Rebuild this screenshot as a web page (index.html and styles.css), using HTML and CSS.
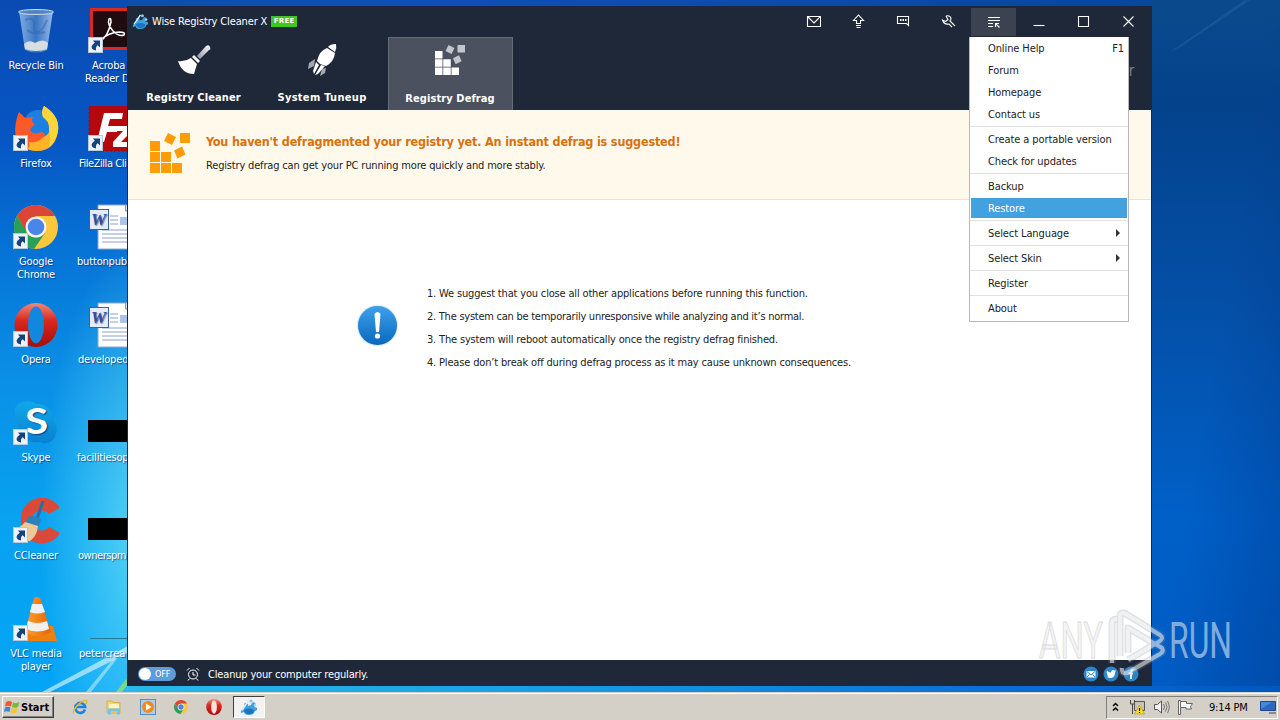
FILE: index.html
```html
<!DOCTYPE html>
<html lang="en">
<head>
    <meta charset="UTF-8">
    <meta name="viewport" content="width=device-width, initial-scale=1.0">
    <title>Wise Registry Cleaner X</title>
    <link rel="stylesheet" href="styles.css">
</head>
<body>
    <!-- Shared icons -->
    <svg class="sprite" width="0" height="0">
        <defs>
            <linearGradient id="gBin" x1="0" x2="1"><stop offset="0" stop-color="#a9cdf0"/><stop offset=".5" stop-color="#4a82c8"/><stop offset="1" stop-color="#c5def5"/></linearGradient>
            <linearGradient id="gFox" x1="0" x2="1"><stop offset="0" stop-color="#f2304c"/><stop offset=".5" stop-color="#ff8a1c"/><stop offset="1" stop-color="#ffd83a"/></linearGradient>
            <linearGradient id="gOpera" x1="0" y1="0" x2="0" y2="1"><stop offset="0" stop-color="#f08a7c"/><stop offset=".4" stop-color="#d8281e"/><stop offset="1" stop-color="#a80c08"/></linearGradient>
            <linearGradient id="gSkype" x1="0" y1="0" x2="0" y2="1"><stop offset="0" stop-color="#10a8ea"/><stop offset="1" stop-color="#0880d0"/></linearGradient>
            <linearGradient id="gCone" x1="0" x2="1"><stop offset="0" stop-color="#ffa030"/><stop offset="1" stop-color="#e86400"/></linearGradient>
            <linearGradient id="gInfo" x1="0" y1="0" x2="0" y2="1"><stop offset="0" stop-color="#3fa0ea"/><stop offset="1" stop-color="#0868c0"/></linearGradient>
            <linearGradient id="gFade" x1="1" y1="0" x2="0" y2="1"><stop offset="0" stop-color="#ffffff"/><stop offset="1" stop-color="#8a90a0"/></linearGradient>
        </defs>
        <symbol id="shortcut" viewBox="0 0 15 16">
            <rect x=".5" y=".5" width="14" height="15" fill="#eef2f8" stroke="#b8c8dc"/>
            <path d="M5 3.500h7v7L9.700 8.300Q7.500 9.500 8 13.500Q4 13 3.500 10Q3.800 7.500 6.800 5.700Z" fill="#16437e"/>
        </symbol>
        <symbol id="chrome" viewBox="0 0 44 44">
            <circle cx="22" cy="22" r="22" fill="#fbc83c"/>
            <path d="M22 11H41.100A22 22 0 0 0 3 11L12 27Z" fill="#dc4638"/>
            <path d="M3 11A22 22 0 0 0 20 44L31.500 27.500Q26 34 18 32Q13 30 12 26Z" fill="#28a05a"/>
            <circle cx="22" cy="22" r="10.500" fill="#f4f6f8"/>
            <circle cx="22" cy="22" r="8.300" fill="#4a86ea"/>
        </symbol>
        <symbol id="opera" viewBox="0 0 44 44">
            <ellipse cx="22" cy="22" rx="21.500" ry="22" fill="url(#gOpera)"/>
            <ellipse cx="22" cy="22" rx="8" ry="18.500" class="opera-hole"/>
        </symbol>
        <symbol id="blocks" viewBox="0 0 40 40">
            <path d="M0 8h10v10H0zM0 19h10v10H0zM0 30h10v10H0zM11 19h10v10H11zM11 30h10v10H11zM22 30h10v10H22z"/>
            <path d="M18 0l8 4-4 8-8-4z" class="loose"/>
            <path d="M30 0h10v10H30z" class="loose"/>
            <path d="M32 13.500l3.500 8-8 4-3.500-8z" class="loose"/>
        </symbol>
        <symbol id="wise" viewBox="0 0 18 18">
            <path d="M5 8Q3 5 6 5Q9 5 8 8L11 7Q12 3 15 5Q17 7 14 9Q18 9 17 12L15 13Q14 17 9 17Q4 17 4 14L1 15Q0 12 3 12Z" fill="#3c9fe0"/>
            <path d="M4 12Q9 9 14 12Q14 16 9 16Q5 16 4 12Z" fill="#1b74bd"/>
            <path d="M2 12L7 5L9 2" stroke="#dceeff" stroke-width="1.500" fill="none"/>
            <circle cx="11" cy="3" r="1.600" fill="#7ccaff"/>
            <circle cx="15" cy="7" r="1.300" fill="#a8dcff"/>
        </symbol>
        <symbol id="word" viewBox="0 0 44 46">
            <path d="M10 1h34v44H10z" fill="#fff" stroke="#8fa4d8"/>
            <path d="M22 12h8M22 16h8M22 20h8M14 26h30M14 30h30M14 34h30M14 38h30" stroke="#8f9fd0"/>
            <path d="M37.500 1v6H44" fill="#dde6f8" stroke="#7f94cc"/>
            <rect x="32" y="13" width="12" height="8" fill="#a9c4ea"/>
            <rect x="1.500" y="5.500" width="19" height="20" fill="#e4ebfa" stroke="#3f5ca8"/>
            <text x="3" y="21" class="word-w">W</text>
        </symbol>
    </svg>

    <div class="desktop">
        <svg class="rays" width="128" height="692" viewBox="0 0 128 692">
            <path d="M42 692L128 646V653L50 692Z" fill="#d8f6ff" opacity=".65"/>
            <path d="M86 692L114 658L116 660L91 692Z" fill="#d8f6ff" opacity=".5"/>
            <path d="M116 692L128 677V684L122 692Z" fill="#8ee070" opacity=".8"/>
        </svg>
        <svg class="ray-right" width="128" height="60" viewBox="0 0 128 60"><path d="M18 52L93 0H98L30 46Z" fill="#6aa4d0" opacity=".15"/></svg>

        <div class="icons">
            <div class="shortcut">
                <svg width="46" height="46" viewBox="0 0 46 46">
                    <path d="M6 3L12 42Q23 47 34 42L40 3Z" fill="url(#gBin)" opacity=".75"/>
                    <path d="M11 36Q16 31 22 35Q30 30 35 35L34 41Q23 45 12 41Z" fill="#d8dde4"/>
                    <path d="M12 12Q22 8 21 18T32 24M14 22Q26 32 34 12" stroke="#2f66b4" stroke-width="2" fill="none" opacity=".5"/>
                    <ellipse cx="23" cy="4" rx="17.500" ry="2.500" fill="#4f86c4" stroke="#d0dde8"/>
                </svg>
                <span>Recycle Bin</span>
            </div>
            <div class="shortcut">
                <svg width="46" height="46" viewBox="0 0 46 46">
                    <path d="M3 20Q4 12 9 8Q10 12 14 12Q25 3 37 9Q43 18 42 28Q36 43 23 43Q6 42 3 20Z" fill="url(#gFox)"/>
                    <circle cx="25" cy="18" r="14" fill="#1f7fe0"/>
                    <path d="M31 0Q47 10 45 25Q42 45 24 45Q6 45 3 26Q10 36 22 35Q37 34 36 23Q37 16 30 11Q28 5 31 0Z" fill="#ffb428"/>
                    <path d="M31 0Q47 10 45 25Q43 36 36 41Q38 30 36 23Q37 16 30 11Q28 5 31 0Z" fill="#ffd63a"/>
                    <path d="M2 24Q3 12 6 6L12 12L20 11Q17 15 22 18L17 23Q19 30 29 26Q35 28 28 33Q24 37 16 36Q18 44 12 41Q2 34 2 24Z" fill="#fb5a28"/>
                </svg>
                <svg class="badge" width="15" height="16"><use href="#shortcut"/></svg>
                <span>Firefox</span>
            </div>
            <div class="shortcut">
                <svg width="46" height="46" viewBox="-1 0 46 44"><use href="#chrome" width="44" height="44"/></svg>
                <svg class="badge" width="15" height="16"><use href="#shortcut"/></svg>
                <span>Google<br>Chrome</span>
            </div>
            <div class="shortcut">
                <svg width="46" height="46" viewBox="-1 0 46 44"><use href="#opera" width="44" height="44"/></svg>
                <svg class="badge" width="15" height="16"><use href="#shortcut"/></svg>
                <span>Opera</span>
            </div>
            <div class="shortcut">
                <svg width="46" height="46" viewBox="0 0 46 46">
                    <path d="M10 2Q18 0 23 4Q38 3 40 19Q46 27 42 37Q36 46 27 42Q6 44 5 25Q0 15 2 8Q5 2 10 2Z" fill="url(#gSkype)"/>
                    <text x="12" y="34" textLength="23" lengthAdjust="spacingAndGlyphs" class="skype-s">S</text>
                </svg>
                <svg class="badge" width="15" height="16"><use href="#shortcut"/></svg>
                <span>Skype</span>
            </div>
            <div class="shortcut">
                <svg width="46" height="46" viewBox="0 0 46 46">
                    <path d="M47 10A21 21 0 0 0 8 22A21 21 0 0 0 47 35L36 29A10 10 0 1 1 36 16Z" fill="#d94a38"/>
                    <path d="M30 3L24 21" stroke="#2a6da4" stroke-width="3"/>
                    <path d="M15 19Q20 16 28 21L26 28L13 25Z" fill="#2f80b8"/>
                    <path d="M12 24L25 28Q24 38 17 43H8Q5 36 0 32Q7 30 12 24Z" fill="#eec896"/>
                </svg>
                <svg class="badge" width="15" height="16"><use href="#shortcut"/></svg>
                <span>CCleaner</span>
            </div>
            <div class="shortcut">
                <svg width="46" height="46" viewBox="0 0 46 46">
                    <path d="M6 30H40L44 45H2Z" fill="#ee8010"/>
                    <path d="M21 2Q24 0 27 2L38 36Q24 44 12 36Z" fill="url(#gCone)"/>
                    <path d="M19 8H29L32 16Q24 19 17 16ZM15 25Q24 29 34 25L36 33Q24 38 13 33Z" fill="#f0f0f0"/>
                </svg>
                <svg class="badge" width="15" height="16"><use href="#shortcut"/></svg>
                <span>VLC media<br>player</span>
            </div>
        </div>

        <div class="icons second">
            <div class="shortcut">
                <svg width="46" height="46" viewBox="0 0 46 46">
                    <rect x="3.500" y="1.500" width="43" height="39" fill="#200c10" stroke="#d82a20" stroke-width="3"/>
                    <path d="M12 33Q20 29 23 14Q23 9 21 11Q19 16 25 23Q31 29 36 27Q38 24 31 24Q20 25 14 31Q11 34 12 33" fill="none" stroke="#fff" stroke-width="1.500"/>
                </svg>
                <svg class="badge" width="15" height="16"><use href="#shortcut"/></svg>
                <span class="ind15">Acroba</span><span class="line2">Reader D</span>
            </div>
            <div class="shortcut">
                <svg width="46" height="46" viewBox="0 0 46 46">
                    <rect x="1" y="0" width="45" height="45" fill="#b4080c" stroke="#8c1020" stroke-dasharray="2 2"/>
                    <path d="M9 36L16 7H35L34 13H22L20 20H30L29 26H19L16 36ZM27 20H44V25L33 36H44V41H25V36L35 25H26Z" fill="#fff"/>
                </svg>
                <svg class="badge" width="15" height="16"><use href="#shortcut"/></svg>
                <span class="ind2 tight">FileZilla Cli</span>
            </div>
            <div class="shortcut">
                <svg width="44" height="46"><use href="#word"/></svg>
                <span>buttonpub</span>
            </div>
            <div class="shortcut">
                <svg width="44" height="46"><use href="#word"/></svg>
                <span class="ind1">developed</span>
            </div>
            <div class="shortcut">
                <svg width="44" height="46"><rect y="20" width="44" height="22"/></svg>
                <span>facilitiesop</span>
            </div>
            <div class="shortcut">
                <svg width="44" height="46"><rect y="20" width="44" height="22"/></svg>
                <span class="ind1 tight">ownerspm</span>
            </div>
            <div class="shortcut">
                <svg width="44" height="46"><rect x="2" y="42" width="42" height="1" fill="#28789c"/></svg>
                <span class="ind2">petercrea</span>
            </div>
        </div>

        <div class="window">
            <div class="header">
                <div class="titlebar">
                    <svg class="logo" width="17" height="17"><use href="#wise"/></svg>
                    <span class="title">Wise Registry Cleaner X</span>
                    <span class="free">FREE</span>
                    <div class="tools">
                        <button><svg width="15" height="15" viewBox="0 0 15 15"><path d="M1.500 2.500h13v10h-13zM2 3l6 6 6-6"/></svg></button>
                        <button><svg width="15" height="15" viewBox="0 0 15 15"><path d="M5.500 9.500v-3h-3l5-5.500 5 5.500h-3v3zM5 11.500h5M5.500 13.500h4"/></svg></button>
                        <button><svg width="15" height="15" viewBox="0 0 15 15"><path d="M1.500 2.500h11v9l-2-2h-9z"/><path d="M4 6h1.500M6.500 6H8M9 6h1.500" stroke-width="2"/></svg></button>
                        <button><svg width="15" height="15" viewBox="0 0 15 15"><path d="M5 2Q9 1 10 4.500Q10 6 9 7L14 12M11 13L8 10Q3 11 1.500 6L4.500 7.500L7 5.500L5 2"/></svg></button>
                        <button class="open"><svg width="15" height="15" viewBox="0 0 15 15"><path d="M2 3.500h12M2 6.500h12M2 9.500h5M2 12.500h5M9.500 13V9.500H13M10 10l3.500 3.500"/></svg></button>
                        <button><svg width="15" height="15" viewBox="0 0 15 15"><path d="M2.500 11.500h11"/></svg></button>
                        <button><svg width="15" height="15" viewBox="0 0 15 15"><path d="M2.500 2.500h10v10h-10z"/></svg></button>
                        <button><svg width="15" height="15" viewBox="0 0 15 15"><path d="M2.500 2.500l10 10M12.500 2.500l-10 10"/></svg></button>
                    </div>
                </div>
                <div class="tabs">
                    <div class="tab">
                        <svg width="34" height="34" viewBox="0 0 34 34">
                            <path d="M20 13L29 3Q32 1 33 4T32 7L23 16Z" fill="url(#gFade)"/>
                            <path d="M17 12L23 18L21 20L15 14Z" fill="#fff"/>
                            <path d="M14 15L20 21L17 31Q5 31 1 18Q8 19 14 15Z" fill="#fff"/>
                        </svg>
                        <span>Registry Cleaner</span>
                    </div>
                    <div class="tab tuneup">
                        <svg width="34" height="34" viewBox="0 0 34 34">
                            <path d="M31 1Q25 1 23 4L30 9Q32 5 31 1Z" fill="#fff"/>
                            <path d="M22 5L30 10Q29 19 21 23L15 21L12 18Q14 8 22 5Z" fill="#fff"/>
                            <path d="M11 19L14 22L9 31L8 28ZM16 22L20 23L13 31L10 32Z" fill="#fff"/>
                            <path d="M10 16L4 20L3 26L9 23ZM21 25L20 30L15 33L17 26Z" fill="#a4a8b2"/>
                        </svg>
                        <span>System Tuneup</span>
                    </div>
                    <div class="tab active">
                        <svg class="blocks" width="30" height="30"><use href="#blocks"/></svg>
                        <span>Registry Defrag</span>
                    </div>
                    <span class="user">r</span>
                </div>
            </div>

            <div class="banner">
                <svg class="blocks" width="40" height="40"><use href="#blocks"/></svg>
                <div>
                    <h1>You haven't defragmented your registry yet. An instant defrag is suggested!</h1>
                    <p>Registry defrag can get your PC running more quickly and more stably.</p>
                </div>
            </div>

            <div class="content">
                <svg width="42" height="42" viewBox="0 0 42 42">
                    <circle cx="20.500" cy="20.500" r="20.500" fill="#d4e8f8"/>
                    <circle cx="20.500" cy="20.500" r="19.500" fill="url(#gInfo)"/>
                    <path d="M17.500 9Q20.500 5 23.500 9L22 27H19Z" fill="#fff"/>
                    <circle cx="20.500" cy="31" r="2.600" fill="#fff"/>
                </svg>
                <div class="tips">
                    <p>1. We suggest that you close all other applications before running this function.</p>
                    <p class="tight">2. The system can be temporarily unresponsive while analyzing and it’s normal.</p>
                    <p>3. The system will reboot automatically once the registry defrag finished.</p>
                    <p>4. Please don’t break off during defrag process as it may cause unknown consequences.</p>
                </div>
            </div>

            <div class="footer">
                <div class="toggle"><i></i><span>OFF</span></div>
                <svg class="clock" width="14" height="14" viewBox="0 0 14 14"><circle cx="7" cy="7.500" r="4.500"/><path d="M7 5v3h2.500M1 3.500L3.500 1M10.500 1L13 3.500M3.500 11.500L2 13.500M10.500 11.500l1.500 2"/></svg>
                <span class="note">Cleanup your computer regularly.</span>
                <div class="social">
                    <svg width="16" height="16" viewBox="0 0 16 16"><circle cx="8" cy="8" r="7.500" fill="#2a86ca"/><path d="M3.500 5h9v6.500h-9z" fill="#fff"/><path d="M4 5.500l4 3.500 4-3.500M4 11l2.500-2.500M12 11L9.500 8.500" fill="none" stroke="#2a86ca"/></svg>
                    <svg width="16" height="16" viewBox="0 0 16 16"><circle cx="8" cy="8" r="7.500" fill="#2a86ca"/><path d="M4 4.500Q6 7 8 6.500Q8 4 10 4L11.500 4.500L13 4.500L12 6.500Q12 12 7 12L3.500 11L5.500 10.500L4 9L4.500 8.500Q3 7 4 4.500Z" fill="#fff"/></svg>
                    <svg width="16" height="16" viewBox="0 0 16 16"><circle cx="8" cy="8" r="7.500" fill="#2a86ca"/><path d="M10.500 4H9.500Q8 4 8 5.500V13M5.500 7.500h4.500" fill="none" stroke="#fff" stroke-width="1.800"/></svg>
                </div>
            </div>

            <ul class="menu">
                <li>Online Help<span>F1</span></li>
                <li>Forum</li>
                <li>Homepage</li>
                <li>Contact us</li>
                <li class="sep"></li>
                <li>Create a portable version</li>
                <li>Check for updates</li>
                <li class="sep"></li>
                <li>Backup</li>
                <li class="selected">Restore</li>
                <li class="sep"></li>
                <li class="sub">Select Language</li>
                <li class="sep"></li>
                <li class="sub">Select Skin</li>
                <li class="sep"></li>
                <li>Register</li>
                <li class="sep"></li>
                <li>About</li>
            </ul>
        </div>
    </div>

    <div class="taskbar">
        <div class="start">
            <svg width="16" height="16" viewBox="0 0 16 16">
                <path d="M2 3Q5 1 8 3L7 7.500Q4 6 1 7.500Z" fill="#f0582c"/>
                <path d="M9 3.500Q12 5 15.500 3L14 8Q11 9.500 8 8Z" fill="#78b83c"/>
                <path d="M1 8.500Q4 7 6.500 8.500L5.500 13Q3 11.500 0 13Z" fill="#3c86d8"/>
                <path d="M7.500 9Q10.500 10.500 13.500 9L12.500 13.500Q9 15 6.500 13.500Z" fill="#fcc428"/>
            </svg>
            <span>Start</span>
        </div>
        <div class="quick">
            <svg width="16" height="16" viewBox="0 0 16 16">
                <path d="M13 10.500A5 5 0 1 1 13.200 8H4" fill="none" stroke="#1b84d4" stroke-width="2.600"/>
                <path d="M2 14.500Q0 13 4 8Q10 1 14 1.500Q16 2 14 5" fill="none" stroke="#e8b830" stroke-width="1.500"/>
            </svg>
            <svg width="16" height="16" viewBox="0 0 16 16">
                <path d="M1 2h5l1 1.500h7V14H1z" fill="#f0d678" stroke="#d4b04c"/>
                <path d="M3 5h10v4H3z" fill="#fdf4c4"/>
                <path d="M2 9.500h12v6h-3v-3H5v3H2z" fill="#7cc0e8"/>
            </svg>
            <svg width="16" height="16" viewBox="0 0 16 16">
                <rect x=".5" y=".5" width="15" height="15" fill="#a8d0f0" stroke="#5090c8"/>
                <circle cx="8" cy="8" r="6" fill="#f48a18"/><path d="M6 4.500L11.500 8L6 11.500Z" fill="#fff"/>
            </svg>
            <svg width="14" height="14"><use href="#chrome"/></svg>
            <svg class="mini-opera" width="16" height="16"><use href="#opera"/></svg>
        </div>
        <div class="running"><svg width="18" height="18"><use href="#wise"/></svg></div>
        <div class="tray">
            <svg width="9" height="12" viewBox="0 0 9 12"><path d="M2 5L4.500 2.500L7 5M2 9.500L4.500 7L7 9.500" fill="none" stroke="#000" stroke-width="1.500"/></svg>
            <svg class="net" width="16" height="16" viewBox="0 0 16 16">
                <path d="M5.500 2.500h10v9h-10z" fill="#c8c4b8" stroke="#555"/>
                <path d="M1.500 1v4h4V1M3.500 5v10" fill="none" stroke="#444"/>
                <path d="M10.500 6L15.500 15H5.500Z" fill="#ffe020" stroke="#b09000" stroke-width=".6"/>
                <path d="M10.500 9v3M10.500 13v1" stroke="#000" stroke-width="1.200"/>
            </svg>
            <svg width="17" height="16" viewBox="0 0 17 16"><path d="M1.500 5.500h3L8.500 2v12L4.500 10.500h-3z" fill="#f4f4f4" stroke="#555"/><path d="M10.500 5Q12.500 8 10.500 11M12.500 3.500Q15.500 8 12.500 12.500M14.500 2Q18 8 14.500 14" fill="none" stroke="#777"/></svg>
            <svg class="flag" width="17" height="16" viewBox="0 0 17 16"><path d="M1.500 15.500V1.500h2v14z" fill="#f8f8f8" stroke="#666"/><path d="M3.500 2.500h6v2h6l-2 3 1 2.500H9V8.500H3.500z" fill="#f8f8f8" stroke="#666"/></svg>
            <span class="time">9:14 PM</span>
            <svg class="show" width="16" height="14" viewBox="0 0 16 14"><path d="M.5 1.500h15v9H.5z" fill="#2a68c4" stroke="#1a4894"/><path d="M1 9L12 2H1Z" fill="#4888d8"/><path d="M9 13h7" stroke="#444"/></svg>
        </div>
    </div>

    <!-- Watermark -->
    <svg class="watermark" width="210" height="80" viewBox="-5 0 210 80">
        <g class="wm-any">
            <text x="4" y="52" textLength="64" lengthAdjust="spacingAndGlyphs">ANY</text>
        </g>
        <g class="wm-run">
            <text x="134" y="52" textLength="63" lengthAdjust="spacingAndGlyphs">RUN</text>
        </g>
        <g class="wm-edge">
            <path d="M77 57V18Q77 13 82 13M85 50V11Q85 5 91 8L125 29Q129 32 125 35L93 54M93 47V22L127 42Q129 46 125 48L92 67Q86 68 87 62"/>
        </g>
        <g class="wm-play">
            <path d="M77 57V18Q77 13 82 13M85 50V11Q85 5 91 8L125 29Q129 32 125 35L93 54M93 47V22L127 42Q129 46 125 48L92 67Q86 68 87 62"/>
        </g>
    </svg>
</body>
</html>
```
FILE: styles.css
```css
* {
    box-sizing: border-box;
}
body {
    margin: 0;
    width: 1280px;
    height: 720px;
    overflow: hidden;
    position: relative;
    display: flex;
    flex-direction: column;
    font: 11px/13px "DejaVu Sans Condensed", "DejaVu Sans", sans-serif;
    font-stretch: condensed;
    letter-spacing: -.17px;
    color: #222;
}
p, h1, ul {
    margin: 0;
    padding: 0;
}
svg {
    display: block;
    flex: none;
}
.sprite {
    position: absolute;
}

/* Desktop */
.desktop {
    position: relative;
    height: 692px;
    background:
        linear-gradient(90deg, #28b8ea 0, #1aa4e8 30%, #0870d8 75%, #0058c0 100%) 128px 686px / 1152px 6px no-repeat,
        linear-gradient(90deg, #0a50b0 0, #0d50bc 30%, #0448a0 100%) 128px 0 / 1024px 6px no-repeat,
        radial-gradient(ellipse 100px 300px at 140px 540px, rgba(110, 226, 248, .75), rgba(80, 210, 245, 0)) 0 0 / 128px 692px no-repeat,
        linear-gradient(#0a4bb2 0, #0656c4 20%, #0676d8 38%, #0a90e6 55%, #08a2f0 75%, #04a4f6 100%) 0 0 / 128px 692px no-repeat,
        linear-gradient(100deg, rgba(0, 96, 204, 0) 50%, rgba(0, 50, 130, .4)) 1152px 0 / 128px 692px no-repeat,
        linear-gradient(#0a4a8c 0, #04428c 15%, #0450a8 45%, #0060c8 75%, #005cc4 100%) 1152px 0 / 128px 692px no-repeat;
}
.rays {
    position: absolute;
    left: 0;
    top: 0;
}
.ray-right {
    position: absolute;
    right: 0;
    top: 0;
}
.icons {
    position: absolute;
    left: 0;
    top: 8px;
    width: 72px;
    display: grid;
    grid-auto-rows: 98px;
    color: #fff;
    text-shadow: 1px 1px 1px rgba(0, 30, 80, .6);
}
.shortcut {
    position: relative;
    display: flex;
    flex-direction: column;
    align-items: center;
    text-align: center;
}
.shortcut span {
    margin-top: 5px;
    white-space: nowrap;
}
.shortcut .badge {
    position: absolute;
    left: 13px;
    top: 29px;
}
.second {
    left: 75px;
}
.second .shortcut {
    align-items: flex-start;
    padding-left: 2px;
}
.second .shortcut > svg {
    margin-left: 11px;
}
.second .shortcut .badge {
    margin-left: 0;
}
.second .ind1 { margin-left: 1px; }
.second .ind2 { margin-left: 2px; }
.second .ind15 { margin-left: 15px; }
.second .shortcut .line2 {
    margin: 0 0 0 8px;
}
.second .tight {
    letter-spacing: -.45px;
}
.opera-hole { fill: var(--hole, #1088e0); }
.mini-opera { --hole: #f4e4e0; }
.word-w { font: bold italic 17px "Liberation Serif", serif; fill: #2f4fa4; }
.skype-s { font: bold 36px Lato, sans-serif; fill: #fff; }

/* Application window */
.window {
    position: absolute;
    left: 127px;
    top: 6px;
    width: 1025px;
    height: 680px;
    display: flex;
    flex-direction: column;
    background: #fff;
    border: solid #1f2838;
    border-width: 0 1px;
}
.header {
    height: 104px;
    background: #1f2838;
    color: #fff;
}
.titlebar {
    height: 31px;
    display: flex;
    align-items: center;
    padding-left: 4px;
}
.title {
    margin-left: 3px;
    letter-spacing: -.14px;
}
.free {
    margin-left: 4px;
    width: 26px;
    height: 11px;
    background: #3cc81e;
    font: bold 7px/11px "DejaVu Sans", sans-serif;
    font-stretch: normal;
    letter-spacing: .3px;
    text-align: center;
}
.tools {
    display: flex;
    margin-left: auto;
    height: 28px;
}
.tools button {
    width: 45px;
    padding: 0 1px 0 0;
    border: 0;
    background: none;
    display: flex;
    align-items: center;
    justify-content: center;
}
.tools .open {
    background: #3c4350;
}
.tools svg {
    fill: none;
    stroke: #fff;
    stroke-width: 1.1;
}
.tabs {
    display: flex;
    gap: 3.500px;
    height: 73px;
    padding-left: 3px;
}
.tab {
    width: 125px;
    display: flex;
    flex-direction: column;
    align-items: center;
    justify-content: space-between;
    padding: 6px 0;
    font-weight: bold;
    letter-spacing: .1px;
}
.tab.tuneup {
    letter-spacing: .3px;
}
.tab.active {
    padding: 6px 1px 5px 0;
    background: #4b515e;
    border: solid #656b77;
    border-width: 1px 1px 0;
}
.tab .blocks {
    fill: #fff;
    margin-top: 1px;
    --loose: #c2c6cc;
}
.loose {
    fill: var(--loose);
}
.user {
    margin-left: auto;
    padding: 28px 17px 0 0;
    font-size: 15px;
    color: #7a818c;
}

.banner {
    display: flex;
    gap: 16px;
    height: 90px;
    padding: 23px 22px;
    background: #fff9ec;
    border-bottom: 1px solid #ece4cc;
}
.banner .blocks {
    fill: #ff9c08;
    --loose: #ff9c08;
}
.banner h1 {
    font-size: 12.5px;
    line-height: 17px;
    letter-spacing: -.18px;
    color: #d8710c;
}
.banner p {
    margin-top: 9px;
}

.content {
    flex: 1;
    display: flex;
    gap: 28px;
    padding: 82px 0 0 229px;
}
.content > svg {
    margin-top: 23px;
}
.tips p {
    line-height: 23px;
    white-space: nowrap;
}
.tips .tight {
    letter-spacing: -.25px;
}

.footer {
    display: flex;
    align-items: center;
    height: 26px;
    padding: 2px 12px 0 10px;
    background: #1f2838;
    color: #fff;
}
.toggle {
    display: flex;
    align-items: center;
    width: 38px;
    height: 14px;
    padding: 1px;
    border-radius: 7px;
    background: #5c9edc;
    font-size: 9px;
}
.toggle i {
    width: 12px;
    height: 12px;
    margin-right: 4px;
    border-radius: 50%;
    background: #fff;
}
.clock {
    margin: 0 8px 0 10px;
    fill: none;
    stroke: #fff;
}
.social {
    display: flex;
    gap: 4px;
    margin-left: auto;
}

/* Drop-down menu */
.menu {
    position: absolute;
    left: 841px;
    top: 31px;
    width: 160px;
    height: 285px;
    list-style: none;
    background: #fff;
    border: solid #b8b8b8;
    border-width: 0 1px 1px;
}
.menu li {
    display: flex;
    align-items: center;
    justify-content: space-between;
    height: 20px;
    margin: 1px 1px 2px;
    padding: 0 3px 0 17px;
    letter-spacing: -.1px;
}
.menu .sep {
    height: 1px;
    margin: 2px 0;
    padding: 0;
    background: #e2e2e2;
}
.menu .selected {
    background: #42a2e0;
    color: #fff;
}
.menu .sub::after {
    content: "";
    margin-right: 4px;
    border: solid transparent;
    border-width: 4px 0 4px 4px;
    border-left-color: #333;
}

/* Taskbar */
.taskbar {
    display: flex;
    align-items: center;
    height: 28px;
    padding: 2px 2px 0;
    background: #d4d0c8;
    box-shadow: inset 0 1px #d4d0c8, inset 0 2px #fff;
}
.start {
    display: flex;
    align-items: center;
    gap: 1px;
    width: 52px;
    height: 22px;
    padding-left: 1px;
    border: 1px solid;
    border-color: #fff #404040 #404040 #fff;
    box-shadow: inset -1px -1px #808080;
    font-weight: bold;
    letter-spacing: 0;
    color: #000;
}
.quick {
    display: flex;
    align-items: center;
    gap: 18px;
    margin-left: 18px;
}
.running {
    display: flex;
    align-items: center;
    justify-content: center;
    width: 32px;
    height: 22px;
    margin-left: 11px;
    background: #f4f2f0;
    border: 1px solid;
    border-color: #404040 #fff #fff #404040;
}
.tray {
    display: flex;
    align-items: center;
    width: 172px;
    height: 23px;
    margin-left: auto;
    padding-left: 4px;
    border: 1px solid;
    border-color: #808080 #fff #fff #808080;
    color: #000;
}
.net { margin: 0 8px 0 9px; }
.flag { margin: 0 15px 0 7px; }
.show { margin-left: 12px; }

.watermark {
    position: absolute;
    left: 1030px;
    top: 606px;
    letter-spacing: 0;
}
.watermark text {
    font: 400 50px Roboto, sans-serif;
}
.wm-any text {
    fill: #f4f4f4;
    stroke: #dcdcdc;
    stroke-width: 1;
}
.wm-run text {
    fill: #7fabde;
}
.wm-edge path {
    fill: none;
    stroke: #8c96a0;
    stroke-width: 7;
    stroke-linejoin: round;
    opacity: .28;
}
.wm-play path {
    fill: none;
    stroke: #fff;
    stroke-width: 4;
    stroke-linejoin: round;
    opacity: .5;
}
```
